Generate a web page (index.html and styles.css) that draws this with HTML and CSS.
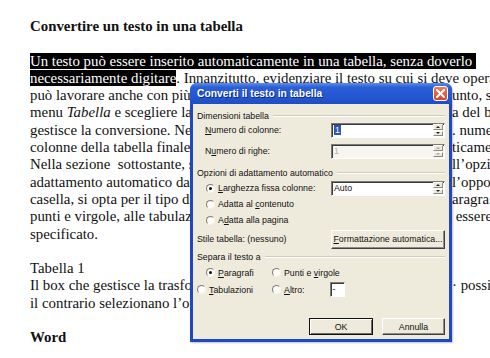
FILE: index.html
```html
<!DOCTYPE html>
<html lang="it">
<head>
    <meta charset="UTF-8">
    <title>Convertire un testo in una tabella</title>
    <link rel="stylesheet" href="styles.css">
</head>
<body>
    <div class="page">
        <div class="doc">
            <h1 class="line bold">Convertire un testo in una tabella</h1>

            <div class="para">
                <div class="line"><span class="sel">Un testo può essere inserito automaticamente in una tabella, senza doverlo&nbsp;</span></div>
                <div class="line"><span class="sel">necessariamente digitare</span>. Innanzitutto, evidenziare il testo su cui si deve operare</div>
                <div class="line split"><span class="l">può lavorare anche con più paragrafi alla volta. A questo p</span><span class="r">unto, s</span></div>
                <div class="line split"><span class="l">menu <em>Tabella</em> e scegliere la voce Converti. Si apre la finestr</span><span class="r">a del b</span></div>
                <div class="line split"><span class="l">gestisce la conversione. Nel primo campo si indica il numero</span><span class="r">. nume</span></div>
                <div class="line split"><span class="l">colonne della tabella finale, mentre le righe vengono calcolate automa</span><span class="r">ticame</span></div>
                <div class="line split"><span class="l">Nella sezione &nbsp;sottostante, si sceglie il tipo di opzione de</span><span class="r">ll’opzi</span></div>
                <div class="line split"><span class="l">adattamento automatico dalla lista, selezionando l’</span><span class="r">l’oppo</span></div>
                <div class="line split"><span class="l">casella, si opta per il tipo di separatore: ai p</span><span class="r">aragra</span></div>
                <div class="line split"><span class="l">punti e virgole, alle tabulazioni o a un carattere che deve</span><span class="r">&nbsp;essere</span></div>
                <div class="line">specificato.</div>
            </div>

            <div class="para">
                <div class="line">Tabella 1</div>
                <div class="line split"><span class="l">Il box che gestisce la trasformazione del testo in tabella. È</span><span class="r">· possi</span></div>
                <div class="line">il contrario selezionano l’opzione</div>
            </div>

            <div class="line bold">Word</div>
        </div>

        <div class="dialog">
            <div class="titlebar">
                <span class="title">Converti il testo in tabella</span>
                <span class="close">
                    <svg width="9" height="9" viewBox="0 0 9 9"><path d="M1 1 L8 8 M8 1 L1 8" stroke="#fff" stroke-width="2" stroke-linecap="square"/></svg>
                </span>
            </div>
            <div class="dlg-body">
                <div class="legend"><span>Dimensioni tabella</span></div>
                <div class="row">
                    <span class="ind"><u>N</u>umero di colonne:</span>
                    <div class="field"><span class="hl">1</span><span class="spin"><i class="up"></i><i class="down"></i></span></div>
                </div>
                <div class="row gap5">
                    <span class="ind">N<u>u</u>mero di righe:</span>
                    <div class="field off"><span class="dim">1</span><span class="spin"><i class="up"></i><i class="down"></i></span></div>
                </div>

                <div class="legend gap8"><span>Opzioni di adattamento automatico</span></div>
                <div class="row gap1">
                    <span class="opt"><i class="radio on"></i><span><u>L</u>arghezza fissa colonne:</span></span>
                    <div class="field"><span>Auto</span><span class="spin"><i class="up"></i><i class="down"></i></span></div>
                </div>
                <div class="row">
                    <span class="opt"><i class="radio"></i><span>Adatta al <u>c</u>ontenuto</span></span>
                </div>
                <div class="row">
                    <span class="opt"><i class="radio"></i><span>A<u>d</u>atta alla pagina</span></span>
                </div>

                <div class="row tall gap1">
                    <span>Stile tabella: (nessuno)</span>
                    <button class="btn"><u>F</u>ormattazione automatica...</button>
                </div>

                <div class="legend gap2"><span>Separa il testo a</span></div>
                <div class="sep-grid">
                    <span class="opt"><i class="radio on"></i><span><u>P</u>aragrafi</span></span>
                    <span class="opt"><i class="radio"></i><span>Punti e <u>v</u>irgole</span></span>
                    <span class="opt"><i class="radio"></i><span><u>T</u>abulazioni</span></span>
                    <span class="opt"><i class="radio"></i><span><u>A</u>ltro:</span><span class="small-field">-</span></span>
                </div>

                <div class="actions">
                    <button class="btn default">OK</button>
                    <button class="btn">Annulla</button>
                </div>
            </div>
        </div>
    </div>
</body>
</html>
```

FILE: styles.css
```css
* {
    margin: 0;
    padding: 0;
    box-sizing: border-box;
}

body {
    background: #fff;
}

.page {
    position: relative;
    width: 490px;
    height: 358px;
    overflow: hidden;
    background: #fff;
}

/* document text */
.doc {
    padding: 18px 0 0 30px;
    font-family: "Liberation Serif", "Times New Roman", serif;
    font-size: 14.85px;
    line-height: 17.3px;
    color: #111;
}

.line {
    white-space: nowrap;
    height: 17.3px;
}

.bold {
    font-weight: bold;
    font-size: 14.85px;
}

.para {
    margin-top: 17.3px;
    margin-bottom: 17.3px;
}

.sel {
    background: #000;
    color: #fff;
}

.split {
    display: grid;
    grid-template-columns: 422px max-content;
}

.split .l {
    overflow: hidden;
}

/* dialog window */
.dialog {
    position: absolute;
    left: 190px;
    top: 83px;
    width: 262px;
    height: 259px;
    display: flex;
    flex-direction: column;
    padding: 0 3px 3px;
    background: #1d48bf;
    border-radius: 7px 7px 0 0;
    box-shadow: 1px 1px 2px rgba(0, 0, 0, 0.25);
    font-family: "Liberation Sans", Arial, sans-serif;
    font-size: 8.8px;
    color: #111;
}

.titlebar {
    height: 22px;
    margin: 0 -3px;
    padding: 0 4px 0 7px;
    display: flex;
    align-items: center;
    justify-content: space-between;
    background: linear-gradient(#5a90ee, #2a5fd8 20%, #2356d0 70%, #1f4cc2);
    border-radius: 7px 7px 0 0;
}

.title {
    color: #fff;
    font-weight: bold;
    font-size: 10.3px;
    text-shadow: 1px 1px 0 #0c2a80;
}

.close {
    width: 15px;
    height: 15px;
    display: flex;
    align-items: center;
    justify-content: center;
    background: linear-gradient(#e8815f, #d1462a);
    border: 1px solid #fff;
    border-radius: 3px;
}

.dlg-body {
    flex: 1;
    display: flex;
    flex-direction: column;
    padding: 6px 4px 4px;
    background: #eeebdc;
}

.legend {
    height: 12px;
    display: flex;
    align-items: center;
    gap: 4px;
}

.legend::after {
    content: "";
    flex: 1;
    border-top: 1px solid #cfcbbb;
    border-bottom: 1px solid #fff;
}

.row {
    height: 16px;
    display: grid;
    grid-template-columns: 134px 1fr;
    align-items: center;
}

.row.tall {
    height: 20px;
}

.gap1 { margin-top: 1px; }
.gap2 { margin-top: 2px; }
.gap5 { margin-top: 5px; }
.gap8 { margin-top: 8px; }

.ind {
    padding-left: 8px;
}

.opt {
    display: flex;
    align-items: center;
    gap: 3px;
    padding-left: 9px;
    white-space: nowrap;
}

.radio {
    display: inline-flex;
    align-items: center;
    justify-content: center;
    width: 9px;
    height: 9px;
    border-radius: 50%;
    background: #fbfbf7;
    border: 1px solid;
    border-color: #7e7e7e #f4f4ee #f4f4ee #7e7e7e;
}

.radio.on::after {
    content: "";
    width: 3px;
    height: 3px;
    border-radius: 50%;
    background: #111;
}

.field {
    height: 15px;
    display: flex;
    align-items: center;
    justify-content: space-between;
    padding: 0 1px 0 2px;
    background: #fff;
    border: 1px solid;
    border-color: #7b7b7b #fff #fff #7b7b7b;
    box-shadow: inset 1px 1px 0 #3a3a3a;
}

.field.off {
    background: #f6f5ef;
}

.hl {
    background: #2c55b8;
    color: #fff;
    padding: 0 1px;
}

.dim {
    color: #b3b0a2;
}

.spin {
    width: 10px;
    height: 12px;
    display: flex;
    flex-direction: column;
    gap: 1px;
}

.spin i {
    flex: 1;
    display: flex;
    align-items: center;
    justify-content: center;
    background: #ece9d8;
    border: 1px solid;
    border-color: #fff #8a8a8a #8a8a8a #fff;
}

.spin .up::after,
.spin .down::after {
    content: "";
    border-left: 2px solid transparent;
    border-right: 2px solid transparent;
}

.spin .up::after {
    border-bottom: 2px solid #222;
}

.spin .down::after {
    border-top: 2px solid #222;
}

.field.off .spin .up::after { border-bottom-color: #aaa; }
.field.off .spin .down::after { border-top-color: #aaa; }

.btn {
    height: 19px;
    font-family: inherit;
    font-size: 8.8px;
    color: #111;
    background: #eeebdc;
    border: 1px solid;
    border-color: #fff #404040 #404040 #fff;
    box-shadow: inset -1px -1px 0 #8c8c8c;
}

.sep-grid {
    margin-top: 1px;
    display: grid;
    grid-template-columns: 75px 1fr;
    grid-auto-rows: 17px;
    align-items: center;
}

.sep-grid .opt + .opt {
    padding-left: 0;
}

.small-field {
    width: 15px;
    height: 15px;
    margin-left: 22px;
    padding-left: 2px;
    line-height: 13px;
    background: #fff;
    border: 1px solid;
    border-color: #7b7b7b #fff #fff #7b7b7b;
    box-shadow: inset 1px 1px 0 #3a3a3a;
}

.actions {
    margin-top: 20px;
    display: flex;
    justify-content: flex-end;
    gap: 9px;
}

.actions .btn {
    width: 63px;
    height: 17px;
}

.actions .default {
    width: 64px;
    border: 1px solid #111;
    box-shadow: inset 1px 1px 0 #fff, inset -1px -1px 0 #6c6c6c;
}
```
